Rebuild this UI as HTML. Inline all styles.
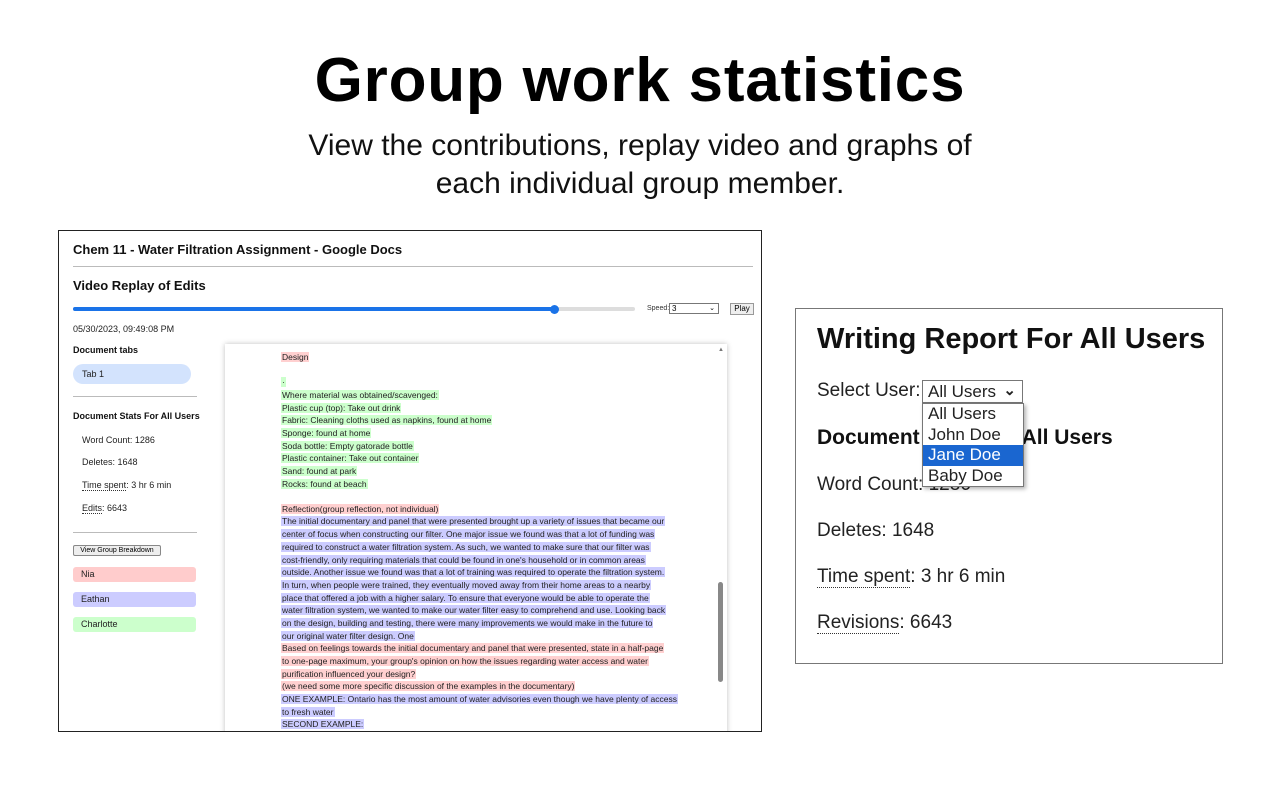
<!DOCTYPE html>
<html><head><meta charset="utf-8"><style>
*{margin:0;padding:0;box-sizing:border-box}
body{width:1280px;height:800px;background:#fff;font-family:"Liberation Sans",sans-serif;position:relative;overflow:hidden;color:#000}
.abs{position:absolute}
h1{position:absolute;left:0;width:1280px;top:45px;text-align:center;font-size:62px;font-weight:bold;letter-spacing:0.8px}
.sub{position:absolute;left:0;width:1280px;top:127px;text-align:center;font-size:30px;line-height:38px;color:#111}
#lp{left:58px;top:230px;width:704px;height:502px;border:1px solid #222;overflow:hidden}
.s{font-size:9px;color:#222}
.doc{left:166px;top:113px;width:502px;height:400px;box-shadow:0 0 5px rgba(0,0,0,.25);background:#fff;overflow:hidden}
.dl{position:absolute;left:56px;font-size:8.5px;line-height:12px;white-space:nowrap;color:#222}
.dl span{padding:0 1px}
.g{background:#ccffcc}.p{background:#ffd0d0}.b{background:#ccccff}
.pill{position:absolute;left:14px;width:123px;height:15px;border-radius:3px;font-size:9px;line-height:15px;padding-left:8px;color:#222}
#rp{left:795px;top:308px;width:428px;height:356px;border:1px solid #777}
.r{position:absolute;left:21px;font-size:19px;color:#222}
.u{border-bottom:1px dotted #333}
</style></head><body>
<h1>Group work statistics</h1>
<div class="sub">View the contributions, replay video and graphs of<br>each individual group member.</div>

<div id="lp" class="abs">
  <div class="abs" style="left:14px;top:11px;font-size:13px;font-weight:bold;color:#111">Chem 11 - Water Filtration Assignment - Google Docs</div>
  <div class="abs" style="left:14px;top:35px;width:680px;height:1px;background:#bbb"></div>
  <div class="abs" style="left:14px;top:47px;font-size:13px;font-weight:bold;color:#111">Video Replay of Edits</div>
  <div class="abs" style="left:14px;top:76px;width:562px;height:4px;border-radius:2px;background:#ddd"></div>
  <div class="abs" style="left:14px;top:76px;width:482px;height:4px;border-radius:2px;background:#1a73e8"></div>
  <div class="abs" style="left:491px;top:74px;width:9px;height:9px;border-radius:50%;background:#1a73e8"></div>
  <div class="abs" style="left:588px;top:74px;font-size:7px;color:#333">Speed:</div>
  <div class="abs" style="left:610px;top:72px;width:50px;height:11px;border:1px solid #777;font-size:8px;line-height:9px;padding-left:2px">3<span style="position:absolute;right:3px;top:0;font-size:7px">&#8964;</span></div>
  <div class="abs" style="left:671px;top:72px;width:24px;height:12px;border:1px solid #999;background:#eee;font-size:8px;line-height:10px;text-align:center">Play</div>
  <div class="abs s" style="left:14px;top:93px">05/30/2023, 09:49:08 PM</div>
  <div class="abs s" style="left:14px;top:114px;font-weight:bold;color:#111">Document tabs</div>
  <div class="abs" style="left:14px;top:133px;width:118px;height:20px;border-radius:10px;background:#d3e3fd;font-size:9px;line-height:20px;padding-left:9px;color:#222">Tab 1</div>
  <div class="abs" style="left:14px;top:165px;width:124px;height:1px;background:#bbb"></div>
  <div class="abs s" style="left:14px;top:180px;font-weight:bold;color:#111">Document Stats For All Users</div>
  <div class="abs s" style="left:23px;top:204px">Word Count: 1286</div>
  <div class="abs s" style="left:23px;top:226px">Deletes: 1648</div>
  <div class="abs s" style="left:23px;top:249px"><span class="u">Time spent</span>: 3 hr 6 min</div>
  <div class="abs s" style="left:23px;top:272px"><span class="u">Edits</span>: 6643</div>
  <div class="abs" style="left:14px;top:301px;width:124px;height:1px;background:#bbb"></div>
  <div class="abs" style="left:14px;top:314px;width:88px;height:11px;border:1px solid #888;background:#eee;font-size:7px;line-height:9px;text-align:center;border-radius:2px">View Group Breakdown</div>
  <div class="pill" style="top:336px;background:#ffcccc">Nia</div>
  <div class="pill" style="top:361px;background:#ccccff">Eathan</div>
  <div class="pill" style="top:386px;background:#ccffcc">Charlotte</div>

  <div class="abs doc">
    <div class="dl" style="top:7px"><span class="p">Design</span></div>
    <div class="dl" style="top:32px"><span class="g">·</span></div>
    <div class="dl" style="top:45px"><span class="g">Where material was obtained/scavenged:</span></div>
    <div class="dl" style="top:58px"><span class="g">Plastic cup (top): Take out drink</span></div>
    <div class="dl" style="top:70px"><span class="g">Fabric: Cleaning cloths used as napkins, found at home</span></div>
    <div class="dl" style="top:83px"><span class="g">Sponge: found at home</span></div>
    <div class="dl" style="top:96px"><span class="g">Soda bottle: Empty gatorade bottle</span></div>
    <div class="dl" style="top:108px"><span class="g">Plastic container: Take out container</span></div>
    <div class="dl" style="top:121px"><span class="g">Sand: found at park</span></div>
    <div class="dl" style="top:134px"><span class="g">Rocks: found at beach</span></div>
    <div class="dl" style="top:159px"><span class="p">Reflection(group reflection, not individual)</span></div>
    <div class="dl" style="top:171px"><span class="b">The initial documentary and panel that were presented brought up a variety of issues that became our</span></div>
    <div class="dl" style="top:184px"><span class="b">center of focus when constructing our filter. One major issue we found was that a lot of funding was</span></div>
    <div class="dl" style="top:197px"><span class="b">required to construct a water filtration system. As such, we wanted to make sure that our filter was</span></div>
    <div class="dl" style="top:210px"><span class="b">cost-friendly, only requiring materials that could be found in one's household or in common areas</span></div>
    <div class="dl" style="top:222px"><span class="b">outside. Another issue we found was that a lot of training was required to operate the filtration system.</span></div>
    <div class="dl" style="top:235px"><span class="b">In turn, when people were trained, they eventually moved away from their home areas to a nearby</span></div>
    <div class="dl" style="top:248px"><span class="b">place that offered a job with a higher salary. To ensure that everyone would be able to operate the</span></div>
    <div class="dl" style="top:260px"><span class="b">water filtration system, we wanted to make our water filter easy to comprehend and use. Looking back</span></div>
    <div class="dl" style="top:273px"><span class="b">on the design, building and testing, there were many improvements we would make in the future to</span></div>
    <div class="dl" style="top:286px"><span class="b">our original water filter design. One</span></div>
    <div class="dl" style="top:298px"><span class="p">Based on feelings towards the initial documentary and panel that were presented, state in a half-page</span></div>
    <div class="dl" style="top:311px"><span class="p">to one-page maximum, your group's opinion on how the issues regarding water access and water</span></div>
    <div class="dl" style="top:324px"><span class="p">purification influenced your design?</span></div>
    <div class="dl" style="top:336px"><span class="p">(we need some more specific discussion of the examples in the documentary)</span></div>
    <div class="dl" style="top:349px"><span class="b">ONE EXAMPLE: Ontario has the most amount of water advisories even though we have plenty of access</span></div>
    <div class="dl" style="top:362px"><span class="b">to fresh water</span></div>
    <div class="dl" style="top:374px"><span class="b">SECOND EXAMPLE:</span></div>
    <div class="abs" style="left:493px;top:3px;font-size:6px;color:#777">▲</div>
    <div class="abs" style="left:493px;top:238px;width:5px;height:100px;border-radius:3px;background:#888"></div>
  </div>
</div>

<div id="rp" class="abs">
  <div class="abs" style="left:21px;top:14px;font-size:29px;font-weight:bold;color:#111">Writing Report For All Users</div>
  <div class="r" style="top:71px">Select User:</div>
  <div class="abs" style="left:126px;top:71px;width:101px;height:23px;border:1px solid #777;font-size:17px;line-height:21px;padding-left:5px;color:#222">All Users<span style="position:absolute;right:6px;top:-1px;font-size:15px;font-weight:bold">&#8964;</span></div>
  <div class="abs" style="left:21px;top:117px;font-size:21px;font-weight:bold;color:#111">Document Stats For All Users</div>
  <div class="r" style="top:165px">Word Count: 1286</div>
  <div class="r" style="top:211px">Deletes: 1648</div>
  <div class="r" style="top:257px"><span class="u">Time spent</span>: 3 hr 6 min</div>
  <div class="r" style="top:303px"><span class="u">Revisions</span>: 6643</div>
  <div class="abs" style="left:126px;top:94px;width:102px;height:84px;border:1px solid #777;background:#fff;box-shadow:2px 2px 4px rgba(0,0,0,.3);font-size:17px;line-height:20.5px;color:#222">
    <div style="padding-left:5px">All Users</div>
    <div style="padding-left:5px">John Doe</div>
    <div style="padding-left:5px;background:#1a66d0;color:#fff">Jane Doe</div>
    <div style="padding-left:5px">Baby Doe</div>
  </div>
</div>
</body></html>
